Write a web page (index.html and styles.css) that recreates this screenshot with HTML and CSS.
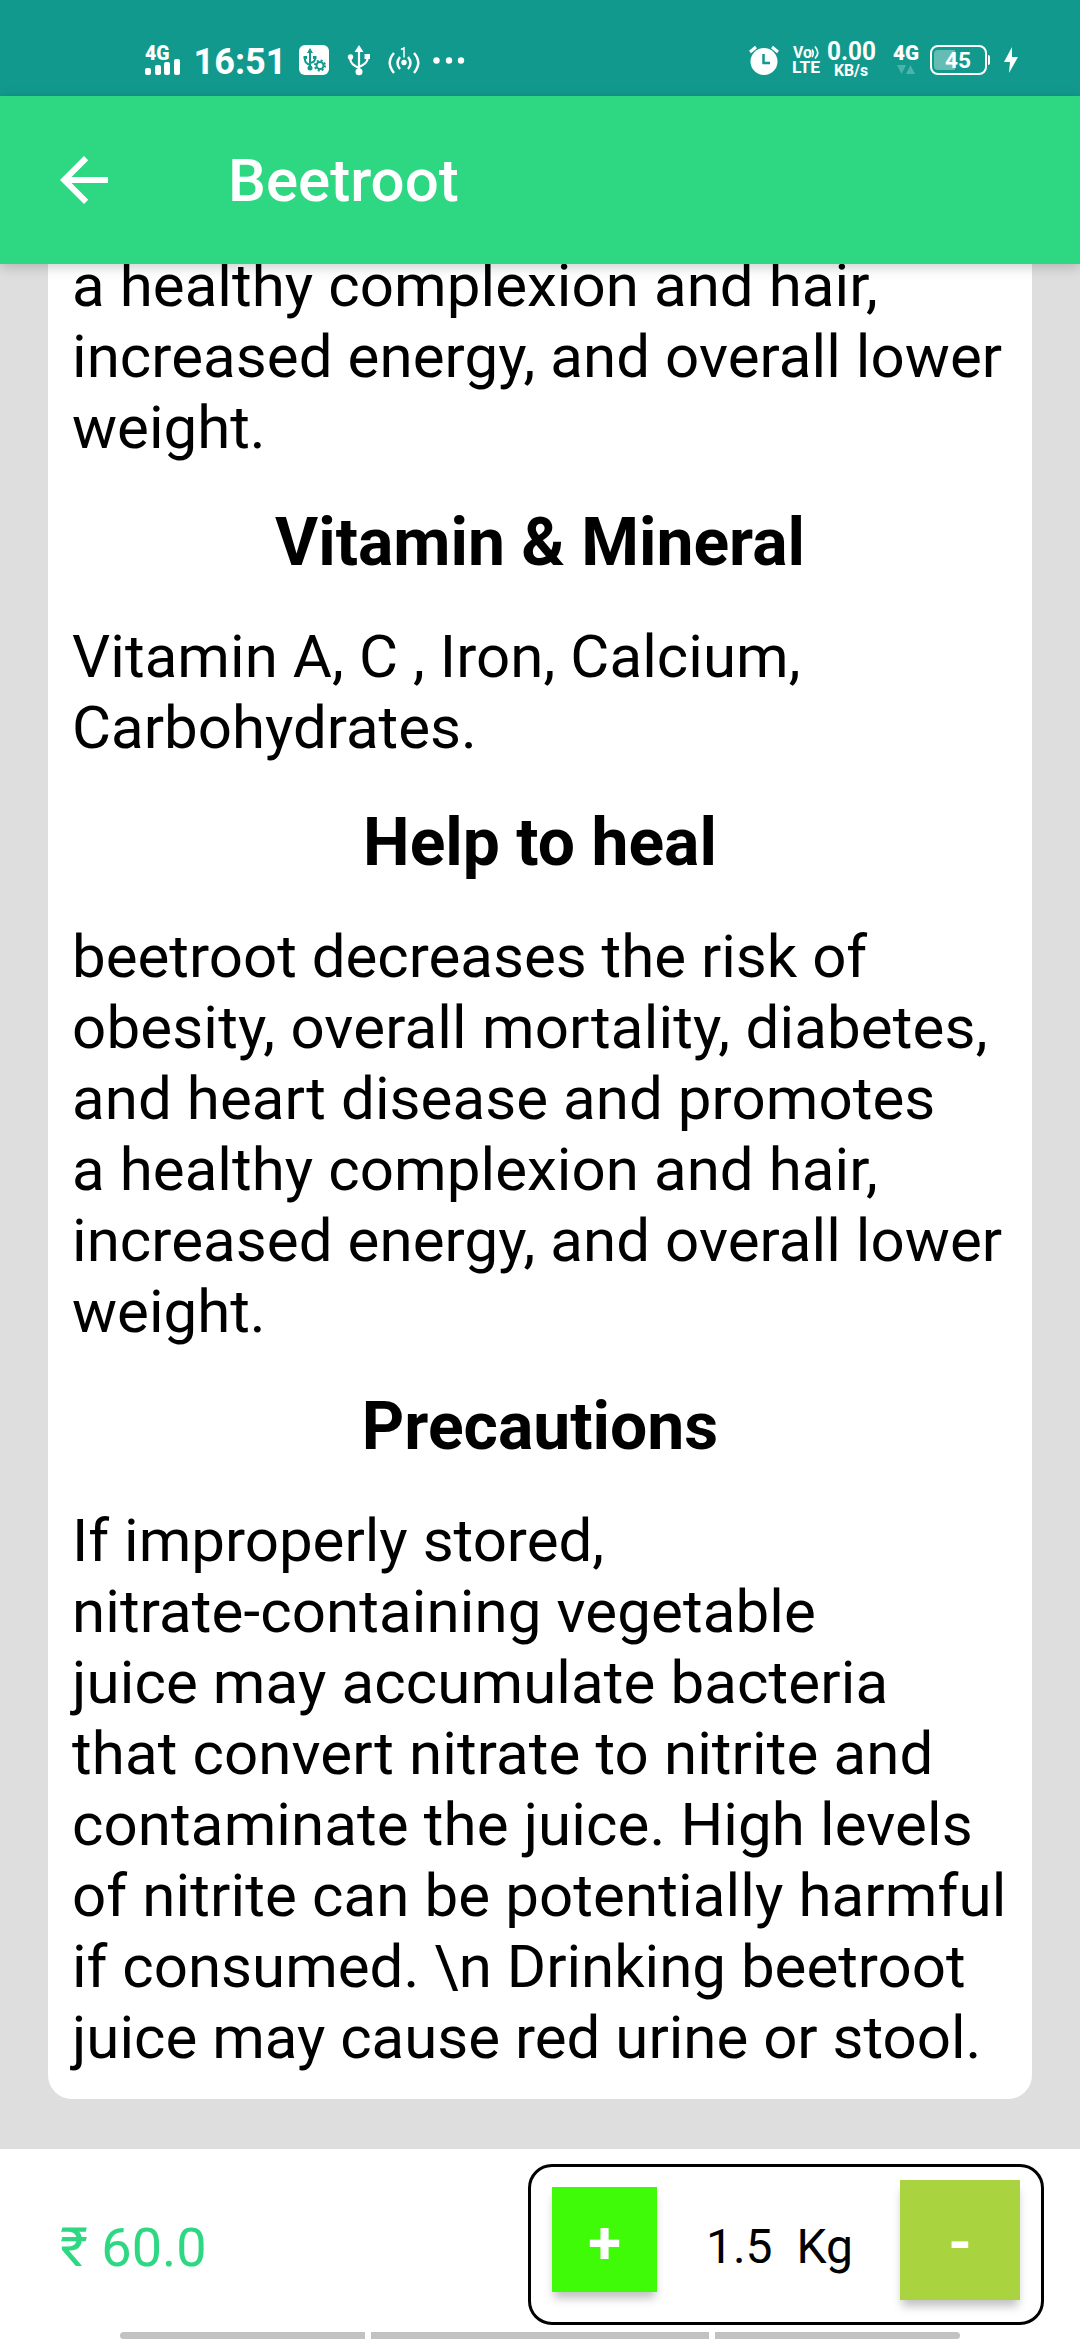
FILE: index.html
```html
<!DOCTYPE html>
<html lang="en">
<head>
<meta charset="utf-8">
<title>Beetroot</title>
<link rel="stylesheet" href="styles.css">
</head>
<body>
<div class="screen">
  <header class="status">
    <svg class="status-art" width="1080" height="96" viewBox="0 0 1080 96" fill="#fff">
      <g class="label">
        <text class="heavy" x="145" y="60" font-size="20" textLength="24.500" lengthAdjust="spacingAndGlyphs">4G</text>
        <text x="193.500" y="74" font-size="36" textLength="93" lengthAdjust="spacingAndGlyphs">16:51</text>
        <text x="793" y="58" font-size="17" textLength="19" lengthAdjust="spacingAndGlyphs">Vo</text>
        <text x="792" y="73" font-size="17" textLength="28" lengthAdjust="spacingAndGlyphs">LTE</text>
        <text x="827" y="60" font-size="25" textLength="49" lengthAdjust="spacingAndGlyphs">0.00</text>
        <text x="834" y="76" font-size="16" textLength="34" lengthAdjust="spacingAndGlyphs">KB/s</text>
        <text class="heavy" x="893" y="60" font-size="20.500" textLength="26" lengthAdjust="spacingAndGlyphs">4G</text>
      </g>
      <rect x="145" y="68" width="6" height="7" rx="2"/>
      <rect x="155" y="65" width="6" height="10" rx="2"/>
      <rect x="164" y="62" width="6" height="13" rx="2"/>
      <rect x="174" y="59" width="6" height="16" rx="2"/>
      <rect x="299" y="45" width="30" height="30" rx="6"/>
      <g stroke="#12998d" fill="none" stroke-width="2">
        <path d="M310 51V67M305 57v3q0 3 5 5M315 57v2q0 3-5 4"/>
        <circle cx="320" cy="65.500" r="3.500"/>
        <circle cx="320" cy="65.500" r="5" stroke-dasharray="2 1.930"/>
      </g>
      <path fill="#12998d" d="M310 48l3 5h-6zM303.500 56h3.500v3h-3.500zM313 56h3.500v3h-3.500z"/>
      <circle cx="310" cy="68" r="2.500" fill="#12998d"/>
      <path d="M359 45l4.500 7h-9z"/>
      <path d="M359 50V72M350.500 57v3q0 4 8.500 8M367.500 57v2q0 4-8.500 8" fill="none" stroke="#fff" stroke-width="2.200"/>
      <circle cx="350.500" cy="57" r="2.700"/><rect x="364.500" y="54" width="5.500" height="5"/><circle cx="359" cy="71.700" r="3.500"/>
      <g fill="none" stroke="#fff" stroke-width="2.400">
        <path d="M394 53q-8.500 9.500 0 20M400 57q-5 6 0 12M414 53q8.500 9.500 0 20M408 57q5 6 0 12"/>
        <path d="M401 49.500l3-1.500V57.500" stroke-width="1.500"/>
      </g>
      <circle cx="404" cy="62.500" r="2.700"/>
      <circle cx="436.500" cy="60.500" r="3.200"/><circle cx="449" cy="60.500" r="3.200"/><circle cx="461" cy="60.500" r="3.200"/>
      <circle cx="764" cy="61.500" r="13.500"/>
      <path d="M750 52l6-5M778 52l-6-5" stroke="#fff" stroke-width="3"/>
      <path d="M763.500 54v9h6.500" fill="none" stroke="#12998d" stroke-width="2.500"/>
      <path d="M812 49.500q2.500 4 0 7.500M815 46.500q5.500 6.500 0 12" fill="none" stroke="#fff" stroke-width="1.700"/>
      <path d="M897 65h9l-4.500 9zM906 74h9l-4.500-9z" fill="#4db3aa"/>
      <rect x="931" y="46" width="55" height="28" rx="7" fill="none" stroke="#fff" stroke-width="2"/>
      <path d="M938 50h17v20h-17q-4 0-4-4v-12q0-4 4-4z" fill="#65bcb4"/>
      <path d="M988 55q2 0 2 2v6q0 2-2 2z"/>
      <text class="label" x="945" y="68" font-size="22" textLength="26" lengthAdjust="spacingAndGlyphs">45</text>
      <path d="M1012 47l-8 15h6l-1 11 9-16h-6z"/>
    </svg>
  </header>
  <nav class="appbar">
    <svg class="back" width="72" height="72" viewBox="0 0 24 24" fill="#fff"><path d="M20 11H7.830l5.590-5.590L12 4l-8 8 8 8 1.410-1.410L7.830 13H20v-2z"/></svg>
    <h1 class="title">Beetroot</h1>
  </nav>
  <main class="content">
    <article class="card">
      <p class="para"><span class="airy">a healthy complexion and hair,<br>increased energy, and overall lower</span><br>weight.</p>
      <h2 class="heading">Vitamin &amp; Mineral</h2>
      <p class="para"><span class="airy">Vitamin A, C , Iron, Calcium,</span><br>Carbohydrates.</p>
      <h2 class="heading">Help to heal</h2>
      <p class="para">beetroot decreases the risk of<br><span class="wide">obesity, overall mortality, diabetes,</span><br><span class="airy">and heart disease and promotes<br>a healthy complexion and hair,<br>increased energy, and overall lower</span><br>weight.</p>
      <h2 class="heading">Precautions</h2>
      <p class="para">If improperly stored,<br><span class="loose">nitrate-containing vegetable<br>juice may accumulate bacteria<br>that convert nitrate to nitrite and<br>contaminate the juice. High levels<br>of nitrite can be potentially harmful</span><br>if consumed. \n Drinking beetroot<br>juice may cause red urine or stool.</p>
    </article>
  </main>
  <footer class="footer">
    <div class="order">
      <div class="price">₹ 60.0</div>
      <div class="stepper">
        <button class="btn plus">+</button>
        <div class="qty"><span>1.5</span><span>Kg</span></div>
        <button class="btn minus">-</button>
      </div>
    </div>
    <div class="gesture"><i class="g1"></i><i class="g2"></i><i class="g3"></i></div>
  </footer>
</div>
</body>
</html>
```
FILE: styles.css
```css
* { box-sizing: border-box; margin: 0; padding: 0; }
body { width: 1080px; height: 2340px; overflow: hidden; font-family: Roboto, sans-serif; color: #000; background: #fff; }
.screen { display: flex; flex-direction: column; height: 2340px; }
.status { height: 96px; flex: none; background: #12998d; }
.status-art { display: block; }
.label { font-family: Roboto, sans-serif; font-weight: 700; }
.heavy { font-weight: 900; }
.appbar { height: 168px; flex: none; display: flex; align-items: center; padding-left: 48px; background: #2ed883; z-index: 1; box-shadow: 0 3px 12px rgba(0, 0, 0, .2); }
.back { flex: none; }
.title { margin-left: 108px; font-size: 60px; font-weight: 500; color: #fff; line-height: 71px; }
.content { height: 1885px; flex: none; overflow: hidden; background: #dedede; padding: 0 48px 50px; }
.card { height: 1835px; background: #fff; border-radius: 0 0 24px 24px; padding: 0 24px; display: flex; flex-direction: column; justify-content: flex-end; padding-bottom: 26px; }
.para { font-size: 60px; line-height: 71px; white-space: nowrap; }
.airy { letter-spacing: .07px; }
.loose { letter-spacing: .12px; }
.wide { letter-spacing: .17px; }
.heading { font-size: 66px; font-weight: 700; line-height: 78px; margin: 41px 0 39px; text-align: center; white-space: nowrap; }
.footer { flex: 1; background: #fff; display: flex; flex-direction: column; }
.order { display: flex; justify-content: space-between; align-items: center; height: 176px; padding: 15px 36px 0 60px; }
.price { font-size: 54px; color: #2ed883; padding-top: 5px; }
.stepper { width: 516px; height: 161px; border: 3px solid #000; border-radius: 24px; display: flex; align-items: center; justify-content: space-between; padding: 0 21px; }
.btn { border: 0; border-radius: 0; color: #fff; font: 700 60px Roboto, sans-serif; padding-top: 5px; box-shadow: 0 8px 9px -2px rgba(0, 0, 0, .25); }
.plus { width: 105px; height: 105px; background: #3ffb08; margin-bottom: 10px; }
.minus { width: 120px; height: 120px; background: #a9d43f; margin-bottom: 9px; }
.qty { display: flex; gap: 24px; font-size: 48px; padding: 4px 0 0 2px; }
.gesture { display: flex; gap: 6px; padding: 7px 0 0 120px; height: 15px; }
.gesture i { height: 7px; background: #c2c2c2; }
.g1 { width: 245px; border-radius: 4px 0 0 4px; }
.g2 { width: 338px; }
.g3 { width: 245px; border-radius: 0 4px 4px 0; }
```
